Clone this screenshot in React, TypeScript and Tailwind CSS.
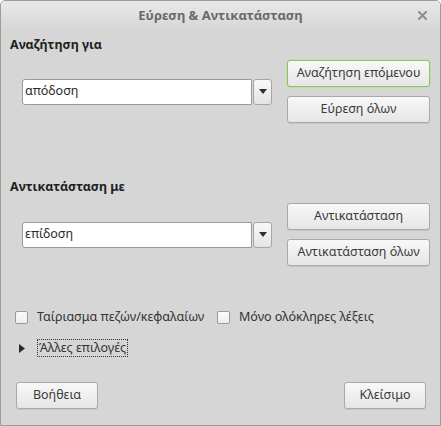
import React from "react";

const font = { fontFamily: '"Noto Sans", "DejaVu Sans", sans-serif' };

function Btn({ children, w, def }: { children: React.ReactNode; w: string; def?: boolean }) {
  return (
    <div
      className={`${w} h-[27px] flex items-center justify-center rounded-[3px] border bg-gradient-to-b from-[#f8f8f8] to-[#e6e6e6] text-[12.5px] text-[#3a3a3a] shadow-[0_1px_0_rgba(0,0,0,0.08)] ${
        def ? "border-[#8fc074] ring-1 ring-[#bde0a8]" : "border-[#a9a9a9]"
      }`}
    >
      {children}
    </div>
  );
}

function Combo({ value }: { value: string }) {
  return (
    <div className="flex h-[26px] w-[250px]">
      <div className="flex-1 flex items-center bg-white border border-[#9a9a9a] rounded-l-[3px] pl-[2px] text-[12.5px] text-[#2b2b2b]">
        {value}
      </div>
      <div className="w-[19px] flex items-center justify-center border border-[#a5a5a5] rounded-[3px] bg-gradient-to-b from-[#f8f8f8] to-[#e4e4e4] ml-[1px]">
        <svg width="8" height="5" viewBox="0 0 8 5">
          <path d="M0 0 L8 0 L4 5 Z" fill="#2e2e2e" />
        </svg>
      </div>
    </div>
  );
}

function Check({ label }: { label: string }) {
  return (
    <div className="flex items-center">
      <div className="w-[13px] h-[13px] rounded-[2px] border border-[#9a9a9a] bg-gradient-to-b from-[#fbfbfb] to-[#eeeeee]" />
      <span className="ml-[9px] text-[12.5px] text-[#333]">{label}</span>
    </div>
  );
}

export default function App() {
  return (
    <div style={font} className="w-[441px] h-[426px] bg-[#d6d6d6] border border-[#9c9c9c] rounded-t-[5px] flex flex-col overflow-hidden">
      <div className="h-[29px] relative flex items-center justify-center bg-gradient-to-b from-[#e9e9e9] to-[#d6d6d6]">
        <span className="font-bold text-[13px] text-[#6a6a6a]">Εύρεση &amp; Αντικατάσταση</span>
        <svg className="absolute right-[13px] top-[10px]" width="9" height="9" viewBox="0 0 9 9">
          <path d="M1 1 L8 8 M8 1 L1 8" stroke="#8c8c8c" strokeWidth="2" strokeLinecap="round" />
        </svg>
      </div>

      <div className="flex flex-col pl-[9px] pr-[10px]">
        <div className="mt-[6px] h-[18px] flex items-center font-bold text-[12.5px] text-[#222]">Αναζήτηση για</div>
        <div className="mt-[6px] flex items-center justify-between">
          <div className="ml-[12px]">
            <Combo value="απόδοση" />
          </div>
          <div className="flex flex-col gap-[9px]">
            <Btn w="w-[143px]" def>
              Αναζήτηση επόμενου
            </Btn>
            <Btn w="w-[143px]">Εύρεση όλων</Btn>
          </div>
        </div>

        <div className="mt-[55px] h-[18px] flex items-center font-bold text-[12.5px] text-[#222]">Αντικατάσταση με</div>
        <div className="mt-[7px] flex items-center justify-between">
          <div className="ml-[12px]">
            <Combo value="επίδοση" />
          </div>
          <div className="flex flex-col gap-[9px]">
            <Btn w="w-[143px]">Αντικατάσταση</Btn>
            <Btn w="w-[143px]">Αντικατάσταση όλων</Btn>
          </div>
        </div>

        <div className="mt-[43px] flex items-center pl-[5px] h-[16px]">
          <div className="w-[202px]">
            <Check label="Ταίριασμα πεζών/κεφαλαίων" />
          </div>
          <Check label="Μόνο ολόκληρες λέξεις" />
        </div>

        <div className="mt-[14px] flex items-center h-[18px] pl-[9px]">
          <svg width="6" height="9" viewBox="0 0 6 9">
            <path d="M0 0 L6 4.5 L0 9 Z" fill="#2a2a2a" />
          </svg>
          <span className="ml-[12px] px-[1px] border border-dotted border-[#333] text-[12.5px] text-[#333] leading-[16px]">
            Άλλες επιλογές
          </span>
        </div>

        <div className="mt-[25px] flex justify-between pl-[6px] pr-[4px]">
          <Btn w="w-[82px]">Βοήθεια</Btn>
          <Btn w="w-[82px]">Κλείσιμο</Btn>
        </div>
      </div>
    </div>
  );
}
